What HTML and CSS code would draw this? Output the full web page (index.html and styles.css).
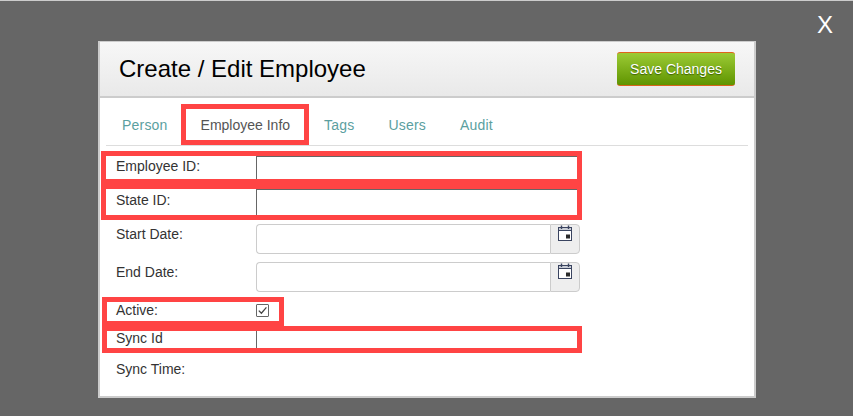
FILE: index.html
```html
<!DOCTYPE html>
<html lang="en">
<head>
<meta charset="utf-8">
<title>Create / Edit Employee</title>
<link rel="stylesheet" href="styles.css">
</head>
<body>
<div class="overlay">
  <span class="close">X</span>
  <div class="modal">
    <header class="modal-header">
      <h1>Create / Edit Employee</h1>
      <button class="save" type="button">Save Changes</button>
    </header>
    <div class="modal-body">
      <nav class="tabs">
        <a class="tab t-person">Person</a>
        <a class="tab active">Employee Info</a>
        <a class="tab">Tags</a>
        <a class="tab">Users</a>
        <a class="tab">Audit</a>
      </nav>
      <form class="form">
        <div class="row r-emp"><label>Employee ID:</label><input class="plain" type="text"></div>
        <div class="row r-state"><label>State ID:</label><input class="plain tall" type="text"></div>
        <div class="row r-date"><label>Start Date:</label>
          <div class="date"><input type="text"><span class="addon">
            <svg width="14" height="16" viewBox="0 0 14 16"><rect x="0.5" y="2.5" width="13" height="13" fill="#fff" stroke="#3a4460"/><path d="M1 3h12v2H1z" fill="#c9cdd6"/><path d="M1 5.5h12" stroke="#3a4460"/><path d="M3.5 0.5v3.5M10.5 0.5v3.5" stroke="#3a4460" stroke-width="1.4"/><rect x="8" y="9.5" width="4" height="4" fill="#2b2b2b"/></svg>
          </span></div>
        </div>
        <div class="row r-date2"><label>End Date:</label>
          <div class="date"><input type="text"><span class="addon">
            <svg width="14" height="16" viewBox="0 0 14 16"><rect x="0.5" y="2.5" width="13" height="13" fill="#fff" stroke="#3a4460"/><path d="M1 3h12v2H1z" fill="#c9cdd6"/><path d="M1 5.5h12" stroke="#3a4460"/><path d="M3.5 0.5v3.5M10.5 0.5v3.5" stroke="#3a4460" stroke-width="1.4"/><rect x="8" y="9.5" width="4" height="4" fill="#2b2b2b"/></svg>
          </span></div>
        </div>
        <div class="row r-active"><label>Active:</label>
          <span class="check"><svg width="13" height="13" viewBox="0 0 13 13"><path d="M2.8 6.6l2.6 2.6L10.4 3.4" fill="none" stroke="#444" stroke-width="1.3"/></svg></span>
        </div>
        <div class="row r-sync"><label>Sync Id</label><input class="plain" type="text"></div>
        <div class="row r-time"><label>Sync Time:</label></div>
      </form>
    </div>
  </div>
  <i class="mark m-tab"></i>
  <i class="mark m-emp"></i>
  <i class="mark m-state"></i>
  <i class="mark m-active"></i>
  <i class="mark m-sync"></i>
</div>
</body>
</html>
```
FILE: styles.css
```css
* { box-sizing: border-box; }
html, body { margin: 0; height: 100%; }
body { font-family: "Liberation Sans", Arial, sans-serif; overflow: hidden; }
.overlay {
  position: relative;
  width: 853px;
  height: 416px;
  background: #666;
  border-top: 1px solid #ccc;
  padding: 40px 0 0 98px;
}
.close {
  position: absolute;
  left: 817px;
  top: 10px;
  color: #fff;
  font-size: 24px;
  line-height: 28px;
}
.modal {
  width: 658px;
  height: 357px;
  background: #fff;
  border: 2px solid #ccc;
  border-top-width: 1px;
}
.modal-header {
  height: 56px;
  display: flex;
  align-items: center;
  justify-content: space-between;
  padding: 0 19px 1px 19px;
  background: linear-gradient(#f7f7f7, #e9e9e9);
  border-bottom: 2px solid #ccc;
}
.modal-header h1 {
  margin: 0;
  font-size: 24px;
  font-weight: 400;
  color: #000;
}
.save {
  width: 118px;
  height: 34px;
  margin-top: 1px;
  padding: 0;
  border: 0;
  border-top: 1px solid #e0641c;
  border-bottom: 1px solid #d9641c;
  border-radius: 3px;
  background: linear-gradient(#9ccb35, #5f9400);
  color: #fff;
  font: 14px "Liberation Sans", Arial, sans-serif;
  text-shadow: 0 1px 1px #3c6200;
}
.modal-body { padding: 0 6px 0 6px; }
.tabs {
  display: flex;
  height: 48px;
  padding: 19px 0 0 16px;
  border-bottom: 1px solid #ddd;
  font-size: 14px;
  line-height: 16px;
  gap: 34px;
}
.tab { color: #5b9f9f; letter-spacing: 0.2px; }
.t-person { margin-right: -1px; }
.tab.active { color: #555; letter-spacing: 0; }
.form { padding-left: 10px; color: #333; font-size: 14px; }
.row { display: flex; align-items: flex-start; }
.row label { width: 140px; flex: none; line-height: 16px; }
.plain {
  width: 322px;
  height: 26px;
  padding: 0;
  border: 1px solid #666;
  background: #fff;
}
.tall { height: 29px; }
.r-emp { margin-top: 10px; height: 33px; }
.r-emp label { padding-top: 2px; height: 20px; }
.r-state { height: 35px; }
.r-state label { padding-top: 3px; height: 20px; }
.r-date { height: 38px; }
.r-date label { padding-top: 2px; height: 20px; }
.r-date2 { height: 37px; }
.r-date2 label { padding-top: 2px; height: 20px; }
.date { display: flex; width: 324px; height: 30px; }
.date input {
  flex: 1;
  min-width: 0;
  padding: 0;
  border: 1px solid #ccc;
  border-right: 0;
  border-radius: 4px 0 0 4px;
  background: #fff;
}
.addon {
  width: 30px;
  display: flex;
  justify-content: center;
  align-items: flex-start;
  padding-top: 0;
  background: #eee;
  border: 1px solid #ccc;
  border-radius: 0 4px 4px 0;
}
.r-active { height: 31px; }
.r-active label { padding-top: 3px; }
.check {
  display: block;
  width: 13px;
  height: 13px;
  margin-top: 5px;
  border: 1px solid #666;
  border-radius: 1px;
  background: #fff;
  position: relative;
}
.check svg { position: absolute; left: -1px; top: -1px; }
.r-sync { height: 29px; }
.r-sync .plain { height: 20px; }
.r-sync label { padding-top: 0; }
.r-time label { padding-top: 2px; }
.mark {
  position: absolute;
  display: block;
  border: 5px solid #ff4444;
}
.m-tab { left: 181px; top: 103px; width: 128px; height: 41px; }
.m-emp { left: 101px; top: 150px; width: 481px; height: 33px; }
.m-state { left: 101px; top: 183px; width: 481px; height: 36px; }
.m-active { left: 102px; top: 296px; width: 182px; height: 29px; }
.m-sync { left: 102px; top: 325px; width: 480px; height: 27px; }
```
